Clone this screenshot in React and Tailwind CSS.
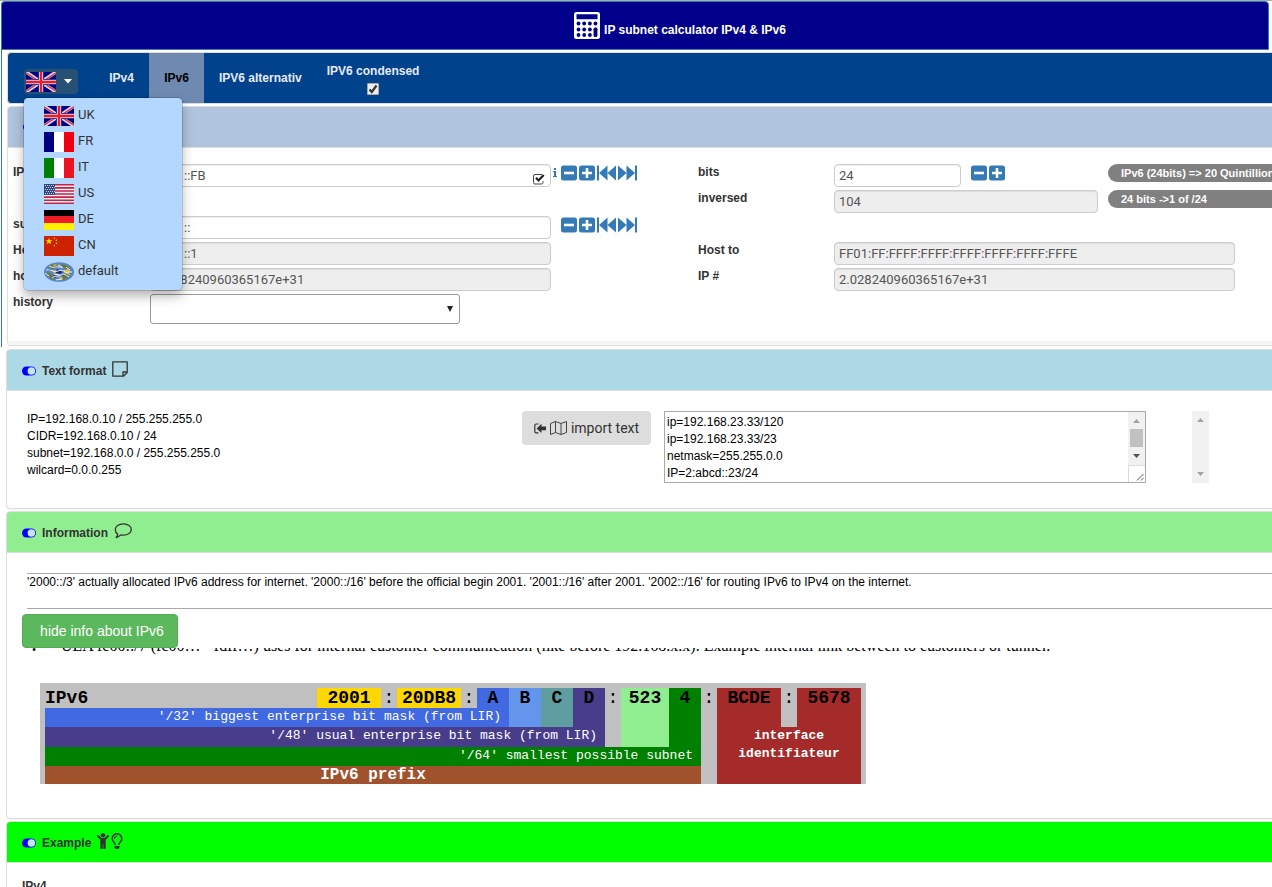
import clsx from 'clsx';
import { useState } from 'react';
import { FaChild, FaRegLightbulb } from 'react-icons/fa';

const UkFlag = () => (
  <svg className="block h-5 w-[30px]" viewBox="0 0 30 20" aria-hidden="true">
    <rect width="30" height="20" fill="#00007f" />
    <path d="M0 0l30 20M30 0L0 20" stroke="#d4d4ea" strokeWidth="3.4" />
    <path
      d="M0 .8l13 8.6M30 .8l-13 8.6M0 19.2l13-8.6M30 19.2l-13-8.6"
      stroke="#e3303c"
      strokeWidth="1.3"
    />
    <path d="M15 0v20M0 10h30" stroke="#00007f" strokeWidth="6" />
    <path d="M15 0v20M0 10h30" stroke="#d8d8f2" strokeWidth="4.4" />
    <path d="M15 0v20M0 10h30" stroke="#ed1c24" strokeWidth="2.4" />
  </svg>
);

const FrFlag = () => (
  <svg className="block h-5 w-[30px]" viewBox="0 0 30 20" aria-hidden="true">
    <rect width="30" height="20" fill="#fff" />
    <rect width="10" height="20" fill="#000080" />
    <rect x="20" width="10" height="20" fill="#ee0010" />
  </svg>
);

const ItFlag = () => (
  <svg className="block h-5 w-[30px]" viewBox="0 0 30 20" aria-hidden="true">
    <rect width="30" height="20" fill="#fff" />
    <rect width="10" height="20" fill="#008000" />
    <rect x="20" width="10" height="20" fill="#ec1420" />
  </svg>
);

const UsFlag = () => (
  <svg className="block h-5 w-[30px]" viewBox="0 0 30 20" aria-hidden="true">
    <rect width="30" height="20" fill="#f6eef2" />
    <path
      d="M0 .8h30M0 3.9h30M0 7h30M0 10h30M0 13.1h30M0 16.2h30M0 19.3h30"
      stroke="#c02548"
      strokeWidth="1.6"
    />
    <rect width="11" height="11" fill="#304a80" />
    <path
      d="M1 1.5h10M2 3.5h9M1 5.5h10M2 7.5h9M1 9.5h10"
      stroke="#c4cde0"
      strokeWidth="1"
      strokeDasharray="1 1"
    />
  </svg>
);

const DeFlag = () => (
  <svg className="block h-5 w-[30px]" viewBox="0 0 30 20" aria-hidden="true">
    <rect width="30" height="20" fill="#fff000" />
    <rect width="30" height="13" fill="#ee1c25" />
    <rect width="30" height="6" fill="#000" />
  </svg>
);

const CnFlag = () => (
  <svg className="block h-5 w-[30px]" viewBox="0 0 30 20" aria-hidden="true">
    <rect width="30" height="20" fill="#cc2200" />
    <path d="M5 2l.9 2.3h2.5l-2 1.5.8 2.5L5 6.8 2.800 8.300l.8-2.500-2-1.500h2.500z" fill="#ffde00" />
    <path
      d="M10 1.500l1 .5-.5 1.200-1-.5zM12 3.500l1.200.3-.4 1.200-1.200-.3zM12 6.500l1.200.3-.4 1.200-1.200-.3zM10 8.800l1 .5-.5 1.200-1-.5z"
      fill="#ffde00"
    />
  </svg>
);

const WorldFlag = () => (
  <svg className="block h-5 w-[30px]" viewBox="0 0 30 20" aria-hidden="true">
    <ellipse cx="15" cy="10" rx="15" ry="9.800" fill="#5b86c4" />
    <path
      d="M4 5l6-3 5 1-3 3-5 1zM18 2l6 2 3 4-5-1-5-3zM2 10l4 1 5 4-2 3-5-4zM21 12l6-1-2 4-6 3-1-3z"
      fill="#68793a"
    />
    <path d="M20 8l4-1 3 3-4 2-3-1zM8 9l3-1 2 2-3 1zM9 3l3-1 1 1-3 1zM15 15l3 0 1 2-3 1z" fill="#d8bd45" />
    <path d="M13 7l6 3-3 2-4-1zM9 13l4 1-2 2zM17 12l3 1-1 1zM4 7l3 1-2 1z" fill="#1d2c66" />
    <path
      d="M5 4c4 3 9-1 14 2M2 8c5-1 8 3 12 1s8 1 12 4M8 16c3-3 7-1 9-3s5 0 8 2M12 18c2-1 4 0 6-1M1 11l4 3M14 3l4 2M22 5l4 3M10 12l6 1M24 10l4 0"
      fill="none"
      stroke="#e6eefa"
      strokeWidth="1"
    />
  </svg>
);

const languages = [
  { label: 'UK', Flag: UkFlag },
  { label: 'FR', Flag: FrFlag },
  { label: 'IT', Flag: ItFlag },
  { label: 'US', Flag: UsFlag },
  { label: 'DE', Flag: DeFlag },
  { label: 'CN', Flag: CnFlag },
  { label: 'default', Flag: WorldFlag },
];

const CalculatorIcon = () => (
  <svg className="h-[27px] w-[26px]" viewBox="0 0 26 27" aria-hidden="true">
    <path
      fill="#fff"
      fillRule="evenodd"
      d="M2.500 0h21A2.500 2.500 0 0126 2.500v22a2.500 2.500 0 01-2.500 2.500h-21A2.500 2.500 0 010 24.500v-22A2.500 2.500 0 012.500 0zM2.500 2.200v5h21v-5z"
    />
    <g fill="#00008b">
      {[11.5, 17.5, 23].map((y) =>
        [4.5, 10.2, 15.9, 21.5].map((x) => (
          <circle key={`${x}-${y}`} cx={x} cy={y} r="1.900" />
        )),
      )}
      <rect x="19.600" y="15.600" width="3.800" height="9.300" rx="1.900" />
    </g>
  </svg>
);

const ToggleIcon = () => (
  <svg className="h-[10px] w-[14px]" viewBox="0 0 14 10" aria-hidden="true">
    <rect y=".5" width="14" height="9" rx="4.500" fill="#0000ff" />
    <circle cx="9.400" cy="5" r="3.800" fill="#c4e4ee" />
  </svg>
);

const NoteIcon = () => (
  <svg className="h-4 w-4" viewBox="0 0 16 16" fill="none" stroke="#333" strokeWidth="1.300" aria-hidden="true">
    <path d="M.8.8h14.400v10.700l-3.700 3.700H.8z" strokeLinejoin="round" />
    <path d="M15 11h-4v4" />
  </svg>
);

const CommentIcon = () => (
  <svg className="h-4 w-[18px]" viewBox="0 0 18 16" fill="none" stroke="#333" strokeWidth="1.300" aria-hidden="true">
    <path
      d="M9.300.8c4.600 0 8 2.500 8 5.700s-3.400 5.700-8 5.700c-.9 0-1.700-.1-2.500-.3-1.300 1.300-2.800 2.200-4.600 2.600.9-1 1.400-2 1.500-3.400C2.100 10.100 1.300 8.400 1.300 6.500 1.300 3.300 4.700.8 9.300.8z"
      strokeLinejoin="round"
    />
  </svg>
);

const ImportIcon = () => (
  <svg className="h-[11px] w-3" viewBox="0 0 12 11" aria-hidden="true">
    <path d="M4.500 1H2.200A1.400 1.400 0 00.8 2.400v6A1.400 1.400 0 002.200 9.800h2.300" fill="none" stroke="#333" strokeWidth="1.200" />
    <path d="M2.600 5.400L7.500.8v2.700H12v3.800H7.500V10z" fill="#333" />
  </svg>
);

const MapIcon = () => (
  <svg className="h-[14px] w-[17px]" viewBox="0 0 17 14" fill="none" stroke="#444" aria-hidden="true">
    <path d="M.5 2.500l5-2 5.500 2 5.500-2v11l-5.500 2-5.500-2-5 2z" strokeLinejoin="round" />
    <path d="M5.500.5v11M11 2.500v11" />
  </svg>
);

const SquareIcon = ({ plus = false }) => (
  <svg className="h-4 w-4" viewBox="0 0 16 16" aria-hidden="true">
    <rect y=".5" width="16" height="15" rx="2.500" fill="#337ab7" />
    <path d={plus ? 'M3 8h10M8 3v10' : 'M3 8h10'} stroke="#fff" strokeWidth="2.600" />
  </svg>
);

const FastIcon = ({ forward = false }) => (
  <svg className={clsx('h-4 w-[19px]', forward && 'rotate-180')} viewBox="0 0 19 16" aria-hidden="true">
    <path d="M0 .5h2v15H0zM10.500.5v15L2 8zM19 .5v15L10.500 8z" fill="#337ab7" />
  </svg>
);

const Stepper = ({ jumps = false, name }) => (
  <div className="flex h-[18px] items-center gap-[2px]">
    <button type="button" aria-label={`decrease ${name}`}>
      <SquareIcon />
    </button>
    <button type="button" aria-label={`increase ${name}`}>
      <SquareIcon plus />
    </button>
    {jumps && (
      <>
        <button type="button" aria-label={`first ${name}`}>
          <FastIcon />
        </button>
        <button type="button" aria-label={`last ${name}`}>
          <FastIcon forward />
        </button>
      </>
    )}
  </div>
);

const Label = ({ htmlFor, children }) => (
  <label htmlFor={htmlFor} className="font-bold leading-[17px] text-[#333]">
    {children}
  </label>
);

const TextBox = ({ id, value, readOnly = false, className = 'w-full' }) => (
  <input
    id={id}
    type="text"
    defaultValue={value}
    readOnly={readOnly}
    className={clsx(
      "h-[23px] rounded-[4px] border border-[#ccc] px-1 font-['Roboto',sans-serif] text-[13px] text-[#555] shadow-[inset_0_1px_1px_rgba(0,0,0,0.075)]",
      readOnly ? 'bg-[#eee]' : 'bg-white',
      className,
    )}
  />
);

const Scrollbar = ({ thumb = false }) => (
  <div className="flex w-[17px] flex-1 flex-col items-center bg-[#f1f1f1]" aria-hidden="true">
    <svg className="h-[17px] w-[17px]" viewBox="0 0 17 17">
      <path d="M5 11h7L8.500 7z" fill="#a3a3a3" />
    </svg>
    {thumb && <div className="h-[18px] w-[13px] bg-[#c1c1c1]" />}
    <svg className="mt-auto h-[17px] w-[17px]" viewBox="0 0 17 17">
      <path d="M5 6h7l-3.500 4z" fill={thumb ? '#505050' : '#a3a3a3'} />
    </svg>
  </div>
);

const Panel = ({ title, icons, headingClass, bodyClass, children }) => (
  <section className="-mr-2 mb-[2px] rounded-[4px] border border-[#ddd] bg-white shadow-[0_1px_1px_rgba(0,0,0,0.05)]">
    <div
      className={clsx(
        'flex h-[41px] items-center gap-[6px] rounded-t-[3px] border-b border-[#ddd] px-[15px] pt-[2px]',
        headingClass,
      )}
    >
      <button type="button" aria-label={`toggle ${title}`}>
        <ToggleIcon />
      </button>
      <h2 className="font-bold text-[#333]">{title}</h2>
      <span className="flex items-center gap-[2px] pb-1 text-[#333]">{icons}</span>
    </div>
    <div className={bodyClass}>{children}</div>
  </section>
);

const LanguageMenu = () => {
  const [open, setOpen] = useState(true);

  return (
    <div className="relative ml-4 mt-4 h-[25px]">
      <button
        type="button"
        aria-label="language"
        aria-expanded={open}
        onClick={() => setOpen(!open)}
        className="flex h-[25px] w-[54px] items-center gap-2 rounded-[4px] bg-[#265175] pl-[2px]"
      >
        <UkFlag />
        <svg className="h-[5px] w-2" viewBox="0 0 8 5" aria-hidden="true">
          <path d="M0 0h8L4 4.500z" fill="#fff" />
        </svg>
      </button>
      {open && (
        <ul className="absolute left-0 top-[29px] z-10 w-[158px] rounded-[4px] bg-[#b3d7ff] py-[5px] pl-5 font-normal shadow-[0_0_0_1px_rgba(0,0,0,0.15),0_6px_12px_rgba(0,0,0,0.3)]">
          {languages.map(({ label, Flag }) => (
            <li key={label}>
              <a
                href={`#${label}`}
                className="flex h-[26px] items-center gap-1 font-['Roboto',sans-serif] text-[13px] text-[#333]"
              >
                <Flag />
                <span className="pb-[3px]">{label}</span>
              </a>
            </li>
          ))}
        </ul>
      )}
    </div>
  );
};

const Nav = () => (
  <nav className="-mr-2 flex h-[52px] rounded-[4px] border border-[#ddd] bg-[#00428c] font-bold text-[#e6eaf2]">
    <LanguageMenu />
    <div className="ml-4 flex">
      <button type="button" className="w-[55px]">
        IPv4
      </button>
      <button type="button" className="w-[55px] bg-[#6f8ab0] text-black">
        IPv6
      </button>
      <button type="button" className="px-[15px]">
        IPV6 alternativ
      </button>
    </div>
    <label className="ml-[10px] mt-[10px] flex flex-col items-center gap-[3px]">
      <span className="leading-[17px]">IPV6 condensed</span>
      <span className="relative h-3 w-3">
        <input
          type="checkbox"
          defaultChecked
          className="peer block h-3 w-3 appearance-none rounded-[1px] border border-[#a9a9a9] bg-[#ececec]"
        />
        <svg
          className="pointer-events-none absolute left-0 top-0 hidden h-3 w-3 peer-checked:block"
          viewBox="0 0 12 12"
          aria-hidden="true"
        >
          <path d="M2.500 6.500l2.300 2.500 4.700-6.500" fill="none" stroke="#333" strokeWidth="2.200" />
        </svg>
      </span>
    </label>
  </nav>
);

const Badge = ({ children }) => (
  <span className="ml-[10px] h-[18px] flex-1 whitespace-nowrap rounded-l-full bg-[#808080] pl-[13px] text-[11px] font-bold leading-[18px] text-white">
    {children}
  </span>
);

const Calculator = () => (
  <section className="-mr-2 mt-[2px] rounded-[4px] border border-[#ddd] bg-white">
    <div className="flex h-[41px] items-center rounded-t-[3px] border-b border-[#ddd] bg-[#b0c4de] px-[15px]">
      <button type="button" aria-label="toggle calculator">
        <ToggleIcon />
      </button>
    </div>
    <form className="grid auto-rows-[26px] grid-cols-[137px_401px_147px_136px_1fr] items-start pb-[21px] pl-[5px] pt-4">
      <Label htmlFor="ip">IP</Label>
      <div className="relative">
        <TextBox id="ip" value="FF01::FB" />
        <svg className="absolute right-1 top-[9px] h-3 w-[14px]" viewBox="0 0 14 12" aria-hidden="true">
          <path d="M9 1.500H2A1.500 1.500 0 00.5 3v6.500A1.500 1.500 0 002 11h6.500A1.500 1.500 0 0010 9.500V8" fill="none" stroke="#444" />
          <path d="M3 4.800l2.500 2.700L10.700 2" fill="none" stroke="#222" strokeWidth="2.200" />
        </svg>
      </div>
      <div className="flex items-start gap-1 pl-[2px] text-[#337ab7]">
        <svg className="mt-1 h-[9px] w-1" viewBox="0 0 4 9" fill="currentColor" aria-hidden="true">
          <path d="M1 0h2v2H1zM0 3h3v5h1v1H0V8h1V4H0z" />
        </svg>
        <Stepper jumps name="ip" />
      </div>
      <Label htmlFor="bits">bits</Label>
      <div className="flex">
        <TextBox id="bits" value="24" className="mr-[10px] w-[127px]" />
        <Stepper name="bits" />
        <div className="ml-[93px] flex flex-1">
          <Badge>IPv6 (24bits) =&gt; 20 Quintillion</Badge>
        </div>
      </div>

      <div className="col-span-3" />
      <Label htmlFor="inversed">inversed</Label>
      <div className="flex">
        <TextBox id="inversed" value="104" readOnly className="w-[264px]" />
        <Badge>24 bits -&gt;1 of /24</Badge>
      </div>

      <Label htmlFor="subnet">subnet</Label>
      <TextBox id="subnet" value="FF01::" />
      <div className="col-span-3 pl-[10px]">
        <Stepper jumps name="subnet" />
      </div>

      <Label htmlFor="host-from">Host from</Label>
      <TextBox id="host-from" value="FF01::1" readOnly />
      <div />
      <Label htmlFor="host-to">Host to</Label>
      <TextBox id="host-to" value="FF01:FF:FFFF:FFFF:FFFF:FFFF:FFFF:FFFE" readOnly className="w-[401px]" />

      <Label htmlFor="hosts">hosts</Label>
      <TextBox id="hosts" value="2.028240960365167e+31" readOnly />
      <div />
      <Label htmlFor="ip-count">IP #</Label>
      <TextBox id="ip-count" value="2.028240960365167e+31" readOnly className="w-[401px]" />

      <Label htmlFor="history">history</Label>
      <div className="relative w-[310px]">
        <select id="history" className="h-[30px] w-full appearance-none rounded-[3px] border border-[#999] bg-white" />
        <svg className="pointer-events-none absolute right-[7px] top-3 h-[6px] w-[6px]" viewBox="0 0 6 6" aria-hidden="true">
          <path d="M0 0h6L3 6z" fill="#222" />
        </svg>
      </div>
    </form>
    <div className="h-1 rounded-b-[3px] bg-[#f5f5f5]" />
  </section>
);

const sample = 'IP=192.168.0.10 / 255.255.255.0\nCIDR=192.168.0.10 / 24\nsubnet=192.168.0.0 / 255.255.255.0\nwilcard=0.0.0.255';
const importSample = 'ip=192.168.23.33/120\nip=192.168.23.33/23\nnetmask=255.255.0.0\nIP=2:abcd::23/24';

const TextFormat = () => (
  <Panel
    title="Text format"
    icons={<NoteIcon />}
    headingClass="bg-[#add8e6]"
    bodyClass="flex items-start pb-[25px] pl-5 pt-5"
  >
    <textarea
      aria-label="text format"
      readOnly
      defaultValue={sample}
      className="h-[72px] w-[495px] resize-none overflow-hidden leading-[17px] text-black"
    />
    <button
      type="button"
      className="flex h-[34px] w-[129px] items-center justify-center gap-1 rounded-[4px] bg-[#ddd] font-['Roboto',sans-serif] text-sm text-[#333]"
    >
      <ImportIcon />
      <MapIcon />
      import text
    </button>
    <div className="ml-[13px] flex h-[72px] w-[482px] border border-[#a9a9a9]">
      <textarea
        aria-label="text to import"
        defaultValue={importSample}
        className="flex-1 resize-none overflow-hidden px-[2px] pt-[2px] leading-[17px] text-black"
      />
      <div className="flex w-[17px] flex-col">
        <Scrollbar thumb />
        <svg className="h-[17px] w-[17px]" viewBox="0 0 17 17" aria-hidden="true">
          <path d="M.5 17V.5H17" fill="none" stroke="#dcdcdc" />
          <path d="M9 15.500l6.500-6.500M13 15.500l2.500-2.500" stroke="#555" />
        </svg>
      </div>
    </div>
    <div className="ml-[46px] flex h-[72px]">
      <Scrollbar />
    </div>
  </Panel>
);

const AddressDiagram = () => (
  <div className="w-[826px] bg-[#c0c0c0] px-[5px] pt-[5px]">
    <table className="w-full table-fixed border-collapse font-['Liberation_Mono',monospace] text-[13px] leading-[18px] text-white">
      <colgroup>
        <col className="w-[272px]" />
        <col className="w-16" />
        <col className="w-4" />
        <col className="w-16" />
        <col className="w-4" />
        <col className="w-8" />
        <col className="w-8" />
        <col className="w-8" />
        <col className="w-8" />
        <col className="w-4" />
        <col className="w-12" />
        <col className="w-8" />
        <col className="w-4" />
        <col className="w-16" />
        <col className="w-4" />
        <col className="w-16" />
      </colgroup>
      <tbody>
        <tr className="h-5 text-center align-top text-lg/5 font-bold text-black">
          <th className="p-0 text-left">IPv6</th>
          <td className="bg-[#ffd700] p-0">2001</td>
          <td className="p-0 font-normal">:</td>
          <td className="bg-[#ffd700] p-0">20DB8</td>
          <td className="p-0 font-normal">:</td>
          <td className="bg-[#4169e1] p-0">A</td>
          <td rowSpan={2} className="bg-[#6495ed] p-0">B</td>
          <td rowSpan={2} className="bg-[#5f9ea0] p-0">C</td>
          <td rowSpan={2} className="bg-[#483d8b] p-0">D</td>
          <td rowSpan={3} className="p-0 font-normal">:</td>
          <td rowSpan={3} className="bg-[#90ee90] p-0">523</td>
          <td rowSpan={3} className="bg-[#008000] p-0">4</td>
          <td rowSpan={5} className="p-0 font-normal">:</td>
          <td rowSpan={2} className="bg-[#a52a2a] p-0">BCDE</td>
          <td rowSpan={2} className="p-0 font-normal">:</td>
          <td rowSpan={2} className="bg-[#a52a2a] p-0">5678</td>
        </tr>
        <tr className="h-[19px] text-right align-top">
          <td colSpan={6} className="bg-[#4169e1] p-0 pr-2">
            '/32' biggest enterprise bit mask (from LIR)
          </td>
        </tr>
        <tr className="h-5 text-right align-top">
          <td colSpan={9} className="bg-[#483d8b] p-0 pr-2">
            '/48' usual enterprise bit mask (from LIR)
          </td>
          <td rowSpan={3} colSpan={3} className="bg-[#a52a2a] p-0 text-center font-bold">
            interface
            <br />
            identifiateur
          </td>
        </tr>
        <tr className="h-[19px] text-right align-top">
          <td colSpan={12} className="bg-[#008000] p-0 pr-2">
            '/64' smallest possible subnet
          </td>
        </tr>
        <tr className="h-[18px] text-center align-top">
          <td colSpan={12} className="bg-[#a0522d] p-0 text-base/[18px] font-bold">
            IPv6 prefix
          </td>
        </tr>
      </tbody>
    </table>
  </div>
);

const Information = () => (
  <Panel title="Information" icons={<CommentIcon />} headingClass="bg-[#90ee90]" bodyClass="pb-[34px] pt-5">
    <p className="ml-5 h-9 border-y border-[#a9a9a9] leading-[17px] text-black">
      '2000::/3' actually allocated IPv6 address for internet. '2000::/16' before the official begin 2001. '2001::/16'
      after 2001. '2002::/16' for routing IPv6 to IPv4 on the internet.
    </p>
    <button
      type="button"
      className="ml-[15px] mt-[5px] block h-[34px] w-[156px] rounded-[4px] border border-[#4cae4c] bg-[#5cb85c] pl-1 text-sm text-white"
    >
      hide info about IPv6
    </button>
    {/* scrolled list, only the foot of its last line is in view */}
    <div className="flex h-[35px] flex-col overflow-hidden pl-[33px]">
      <ul className="-mt-3 list-none whitespace-nowrap font-['Liberation_Serif',serif] text-base/5 text-black">
        <li className="flex">
          <span className="-ml-2 w-[29px] self-end text-xs/3">•</span>
          ULA fc00::/7 (fc00… - fdff…) uses for internal customer communication (like before 192.168.x.x). Example
          internal link between to customers or tunnel.
        </li>
      </ul>
    </div>
    <div className="pl-[33px]">
      <AddressDiagram />
    </div>
  </Panel>
);

const App = () => (
  <div className="overflow-x-hidden border-t border-[#aaa] bg-white font-['Liberation_Sans',sans-serif] text-xs">
    <div className="ml-px rounded-tl-[4px] border-l border-[#337ab7]">
      <header className="-ml-px mr-[3px] flex h-[49px] items-center justify-center gap-1 rounded-t-[4px] border border-[#337ab7] bg-[#00008b] pl-[90px] text-white">
        <CalculatorIcon />
        <h1 className="pt-2 font-bold">IP subnet calculator IPv4 &amp; IPv6</h1>
      </header>
      <div className="pb-px pl-[5px] pt-[2px]">
        <Nav />
        <Calculator />
      </div>
    </div>
    <main className="pl-[6px] pt-[2px]">
      <TextFormat />
      <Information />
      <Panel
        title="Example"
        icons={
          <>
            <FaChild className="h-4 w-3" />
            <FaRegLightbulb className="h-4 w-3" />
          </>
        }
        headingClass="bg-[#00ff00]"
        bodyClass="px-[15px] py-[15px]"
      >
        <h3 className="font-bold leading-[17px] text-[#333]">IPv4</h3>
      </Panel>
    </main>
  </div>
);

export default App;
